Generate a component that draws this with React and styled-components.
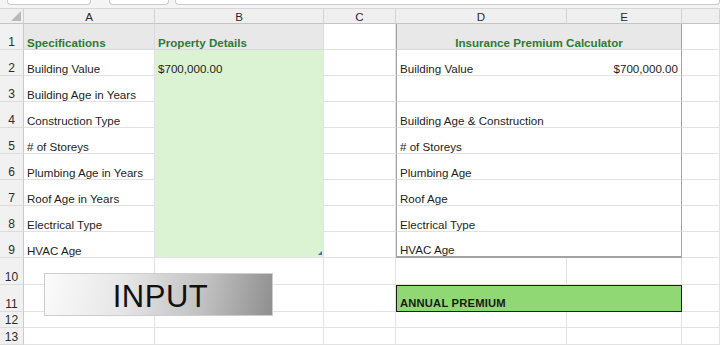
import React from 'react';
import styled, { createGlobalStyle, css } from 'styled-components';

const GlobalStyle = createGlobalStyle`
  html, body {
    margin: 0;
    padding: 0;
    background: #ffffff;
  }
  body {
    font-family: "Liberation Sans", Arial, sans-serif;
    width: 720px;
    height: 345px;
    overflow: hidden;
  }
`;

const GRID = '#e2e2e2';
const BOX = '#a3a3a3';
const GREEN_TEXT = '#2f7a35';

const specs = [
  ['Building Value', '$700,000.00', 'Building Value', '$700,000.00'],
  ['Building Age in Years', '', '', ''],
  ['Construction Type', '', 'Building Age & Construction', ''],
  ['# of Storeys', '', '# of Storeys', ''],
  ['Plumbing Age in Years', '', 'Plumbing Age', ''],
  ['Roof Age in Years', '', 'Roof Age', ''],
  ['Electrical Type', '', 'Electrical Type', ''],
  ['HVAC Age', '', 'HVAC Age', ''],
];

const Window = styled.div`
  display: flex;
  flex-direction: column;
  width: 720px;
  height: 345px;
  background: #f4f4f4;
`;

const Toolbar = styled.div`
  display: flex;
  align-items: flex-start;
  height: 9px;
  padding-left: 7px;
  border-bottom: 1px solid #d6d6d6;
  box-sizing: border-box;
`;

const FieldBox = styled.div`
  height: 4px;
  width: ${(p) => (p.$width ? `${p.$width}px` : 'auto')};
  flex: ${(p) => (p.$width ? 'none' : '1')};
  margin-right: ${(p) => p.$gap || 0}px;
  background: #ffffff;
  border: 1px solid #cacaca;
  border-top: none;
  border-radius: 0 0 4px 4px;
`;

const Sheet = styled.div`
  position: relative;
  flex: 1;
  display: grid;
  grid-template-columns: 24px 131px 169px 72px 171px 115px 1fr;
  grid-template-rows: 15px repeat(9, 26px) 27px 27px 16px 1fr;
  background: #ffffff;
  font-size: 11.6px;
  line-height: 13px;
  color: #1e1e1e;
`;

const Corner = styled.div`
  background: #efefef;
  border-right: 1px solid #cfcfcf;
  border-bottom: 1px solid #c4c4c4;
  display: flex;
  align-items: flex-end;
  justify-content: flex-end;
  padding: 0 2px 2px 0;
`;

const ColHead = styled.div`
  background: #efefef;
  border-right: 1px solid #d3d3d3;
  border-bottom: 1px solid #c4c4c4;
  display: flex;
  align-items: center;
  justify-content: center;
  font-size: 11.6px;
  color: #2b2b2b;
  padding-top: 1px;
`;

const RowHead = styled.div`
  background: #f1f1f1;
  border-right: 1px solid #cbcbcb;
  border-bottom: 1px solid #dcdcdc;
  display: flex;
  align-items: flex-end;
  justify-content: center;
  padding-bottom: 0;
  font-size: 12px;
  color: #2b2b2b;
`;

const Cell = styled.div`
  display: flex;
  align-items: flex-end;
  justify-content: ${(p) => (p.$align === 'right' ? 'flex-end' : p.$align === 'center' ? 'center' : 'flex-start')};
  padding: 0 3px 0 3px;
  white-space: nowrap;
  overflow: hidden;
  border-right: 1px solid ${GRID};
  border-bottom: 1px solid ${GRID};
  background: #ffffff;
  grid-column: ${(p) => p.$span || 'auto'};
`;

const TitleCell = styled(Cell)`
  background: #e8e8e8;
  font-weight: bold;
  color: ${GREEN_TEXT};
  border-right-color: #dadada;
  border-bottom-color: #dadada;
  ${(p) =>
    p.$box &&
    css`
      border-left: 1px solid ${BOX};
      border-right: 1px solid ${BOX};
    `}
`;

const InputCell = styled(Cell)`
  position: relative;
  background: #dbf2d3;
  border-bottom-color: ${(p) => (p.$last ? GRID : '#dbf2d3')};
`;

const Handle = styled.span`
  position: absolute;
  right: 1px;
  bottom: 2px;
  width: 4px;
  height: 4px;
  background: #3b6fb8;
  clip-path: polygon(100% 0, 100% 100%, 0 100%);
`;

const CalcCell = styled(Cell)`
  ${(p) =>
    p.$side === 'left' &&
    css`
      border-left: 1px solid ${BOX};
      border-right: none;
    `}
  ${(p) =>
    p.$side === 'right' &&
    css`
      border-right: 1px solid ${BOX};
    `}
  ${(p) =>
    p.$last &&
    css`
      border-bottom: 2px solid ${BOX};
      padding-bottom: 0;
    `}
`;

const PremiumCell = styled(Cell)`
  background: #8fd873;
  border: 1.5px solid #1c1c1c;
  font-weight: bold;
  font-size: 11.2px;
  color: #1a1a1a;
  padding-bottom: 1px;
  letter-spacing: 0.2px;
`;

const InputButton = styled.div`
  position: absolute;
  left: 44px;
  top: 264px;
  width: 229px;
  height: 43px;
  box-sizing: border-box;
  border: 1px solid #cdcdcd;
  background: linear-gradient(100deg, #fbfbfb 0%, #e6e6e6 35%, #c0c0c0 70%, #8f8f8f 100%);
  display: flex;
  align-items: center;
  justify-content: center;
  font-size: 31px;
  color: #111111;
  letter-spacing: 0.5px;
  padding: 3px 0 0 4px;
`;

const CornerMark = () => (
  <svg width="10" height="10" viewBox="0 0 10 10">
    <polygon points="10,0 10,10 0,10" fill="#b9b9b9" />
  </svg>
);

const letters = ['A', 'B', 'C', 'D', 'E', ''];

export default function App() {
  return (
    <>
      <GlobalStyle />
      <Window>
        <Toolbar>
          <FieldBox $width={82} $gap={18} />
          <FieldBox $width={58} $gap={6} />
          <FieldBox />
        </Toolbar>
        <Sheet>
          <Corner>
            <CornerMark />
          </Corner>
          {letters.map((l, i) => (
            <ColHead key={i}>{l}</ColHead>
          ))}

          <RowHead>1</RowHead>
          <TitleCell>Specifications</TitleCell>
          <TitleCell>Property Details</TitleCell>
          <Cell />
          <TitleCell $span="span 2" $align="center" $box>
            Insurance Premium Calculator
          </TitleCell>
          <Cell />

          {specs.map(([a, b, d, e], i) => {
            const last = i === specs.length - 1;
            return (
              <React.Fragment key={a}>
                <RowHead>{i + 2}</RowHead>
                <Cell>{a}</Cell>
                <InputCell $last={last}>
                  {b}
                  {last && <Handle />}
                </InputCell>
                <Cell />
                <CalcCell $side="left" $last={last}>
                  {d}
                </CalcCell>
                <CalcCell $side="right" $align="right" $last={last}>
                  {e}
                </CalcCell>
                <Cell />
              </React.Fragment>
            );
          })}

          <RowHead>10</RowHead>
          <Cell />
          <Cell />
          <Cell />
          <Cell />
          <Cell />
          <Cell />

          <RowHead>11</RowHead>
          <Cell />
          <Cell />
          <Cell />
          <PremiumCell $span="span 2">ANNUAL PREMIUM</PremiumCell>
          <Cell />

          <RowHead>12</RowHead>
          <Cell />
          <Cell />
          <Cell />
          <Cell />
          <Cell />
          <Cell />

          <RowHead>13</RowHead>
          <Cell />
          <Cell />
          <Cell />
          <Cell />
          <Cell />
          <Cell />

          <InputButton>INPUT</InputButton>
        </Sheet>
      </Window>
    </>
  );
}
